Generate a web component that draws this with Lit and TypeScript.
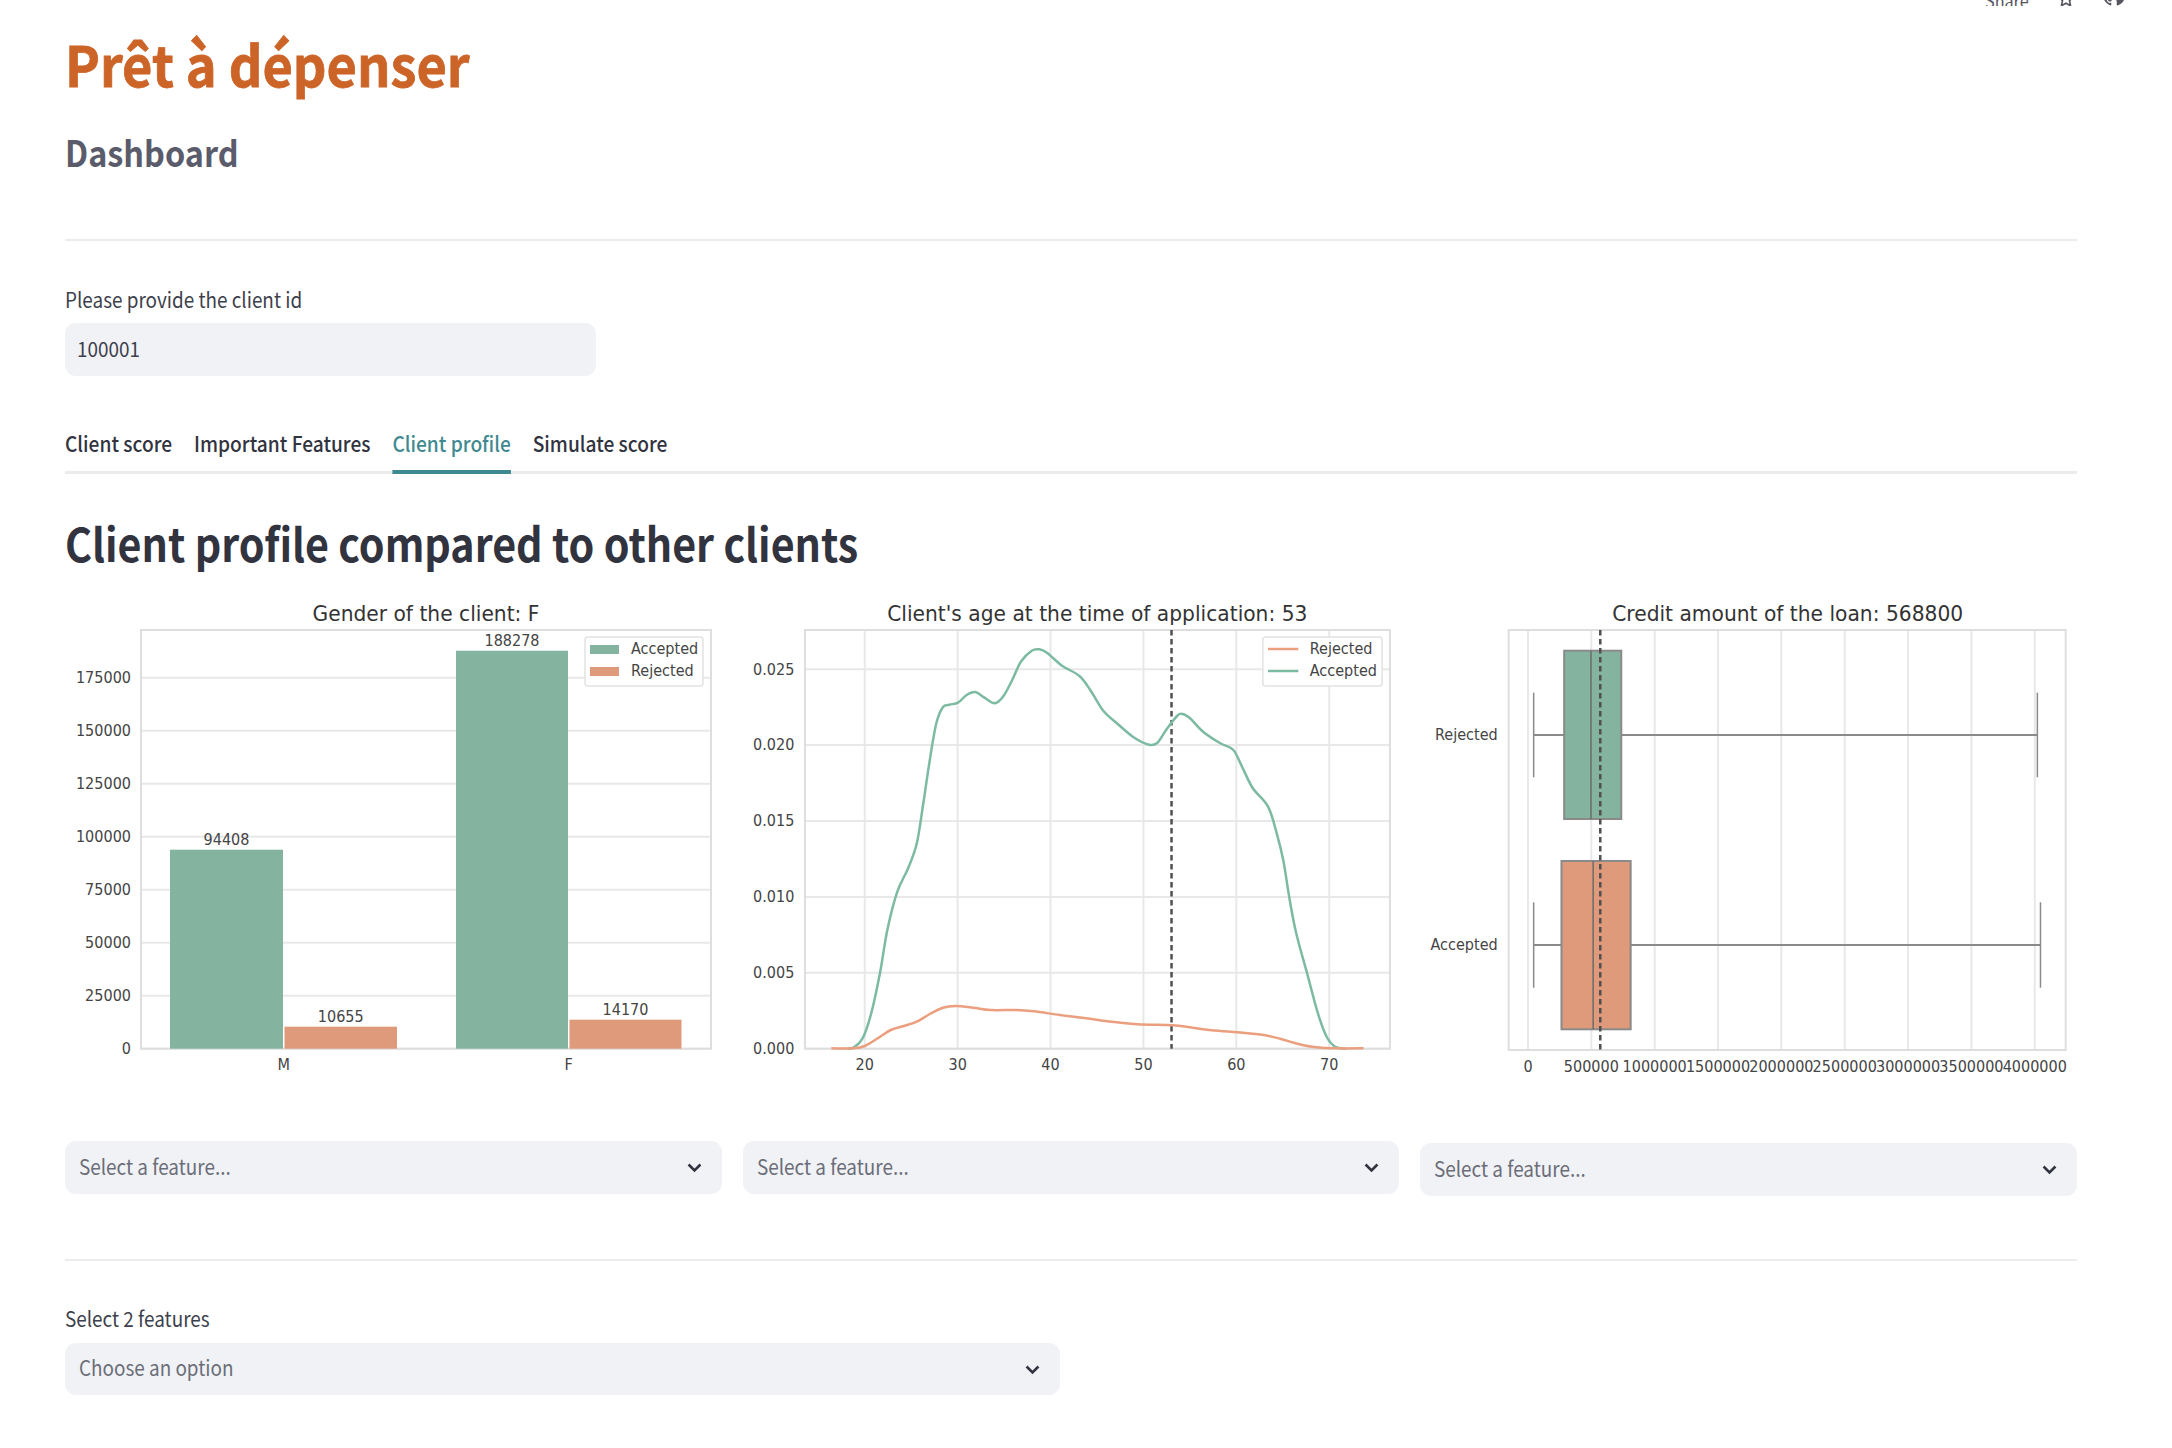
import { LitElement, css, html, svg } from 'lit'
import { customElement } from 'lit/decorators.js'

const GREEN = '#84b4a0'
const ORANGE = '#de9a7a'
const LINE_GREEN = '#7dbaa2'
const LINE_ORANGE = '#eb9f7f'
const GRID = '#e8e8e8'
const FRAME = '#dedede'

// chart text comes out narrow and tall in the source picture, so squeeze it a bit
const label = (x: number, y: number, text: string, cls = 'tick', anchor = 'middle') =>
  svg`<text class=${cls} transform="translate(${x} ${y}) scale(${cls === 'title' ? 0.92 : 0.88} 1)" text-anchor=${anchor} dominant-baseline="central">${text}</text>`

const hline = (x1: number, x2: number, y: number) =>
  svg`<line x1=${x1} x2=${x2} y1=${y} y2=${y} stroke=${GRID} stroke-width="2"></line>`

const vline = (x: number, y1: number, y2: number) =>
  svg`<line x1=${x} x2=${x} y1=${y1} y2=${y2} stroke=${GRID} stroke-width="2"></line>`

const frame = (x1: number, y1: number, x2: number, y2: number) =>
  svg`<rect x=${x1} y=${y1} width=${x2 - x1} height=${y2 - y1} fill="none" stroke=${FRAME} stroke-width="2"></rect>`

const dashed = (x: number, y1: number, y2: number) =>
  svg`<line x1=${x} x2=${x} y1=${y1} y2=${y2} stroke="#505050" stroke-width="2.5" stroke-dasharray="5.5 3.5"></line>`

const legendBox = (x1: number, x2: number) =>
  svg`<rect x=${x1} y="637" width=${x2 - x1} height="49" rx="3" fill="#fff" fill-opacity=".9" stroke="#e2e2e2" stroke-width="1.5"></rect>`

// catmull-rom through the traced points
function smooth(pts: number[][]) {
  let d = `M${pts[0][0]} ${pts[0][1]}`
  for (let i = 0; i < pts.length - 1; i++) {
    const p0 = pts[Math.max(i - 1, 0)]
    const p1 = pts[i]
    const p2 = pts[i + 1]
    const p3 = pts[Math.min(i + 2, pts.length - 1)]
    const c1x = p1[0] + (p2[0] - p0[0]) / 6
    const c1y = p1[1] + (p2[1] - p0[1]) / 6
    const c2x = p2[0] - (p3[0] - p1[0]) / 6
    const c2y = p2[1] - (p3[1] - p1[1]) / 6
    d += ` C${c1x.toFixed(1)} ${c1y.toFixed(1)} ${c2x.toFixed(1)} ${c2y.toFixed(1)} ${p2[0].toFixed(1)} ${p2[1].toFixed(1)}`
  }
  return d
}

const acceptedKde = [
  [270, 1376], [285, 1372], [305, 1345], [325, 1270], [345, 1150], [362, 1020], [385, 905], [410, 835], [430, 760],
  [445, 640], [460, 510], [475, 400], [490, 352], [505, 344], [525, 338], [545, 315], [565, 306], [585, 322],
  [610, 340], [630, 318], [650, 270], [670, 215], [695, 182], [712, 178], [730, 188], [765, 227], [805, 258],
  [830, 300], [860, 362], [890, 398], [930, 442], [965, 464], [985, 458], [1005, 420], [1030, 378], [1043, 372],
  [1060, 385], [1090, 425], [1130, 460], [1160, 480], [1180, 530], [1205, 595], [1240, 650], [1260, 730],
  [1275, 810], [1290, 930], [1305, 1030], [1330, 1150], [1355, 1270], [1375, 1340], [1395, 1370], [1420, 1376],
].map(([x, y]) => [x / 2.306 + 730, y / 3 + 590])

const rejectedKde = [
  [233, 1375], [285, 1375], [310, 1368], [340, 1345], [370, 1320], [400, 1308], [430, 1295], [460, 1272], [490, 1253],
  [520, 1248], [560, 1253], [600, 1260], [660, 1260], [700, 1264], [760, 1275], [820, 1285], [880, 1295], [940, 1303],
  [1020, 1306], [1060, 1312], [1110, 1321], [1170, 1327], [1230, 1335], [1270, 1347], [1310, 1362], [1350, 1372],
  [1400, 1375], [1460, 1375],
].map(([x, y]) => [x / 2.306 + 730, y / 3 + 590])

const genderBars = [
  { x1: 170, x2: 283, top: 849.7, fill: GREEN, value: '94408' },
  { x1: 284.5, x2: 397, top: 1026.7, fill: ORANGE, value: '10655' },
  { x1: 456, x2: 568, top: 650.7, fill: GREEN, value: '188278' },
  { x1: 569.5, x2: 681.5, top: 1019.7, fill: ORANGE, value: '14170' },
]

const creditBoxes = [
  { name: 'Rejected', fill: GREEN, x1: 1564.5, x2: 1621.6, y1: 650.7, y2: 819, med: 1591.3, lo: 1534, hi: 2037.7, mid: 735, capTop: 692.7, capBot: 777.3 },
  { name: 'Accepted', fill: ORANGE, x1: 1561.8, x2: 1631, y1: 861, y2: 1029.3, med: 1593.5, lo: 1534, hi: 2040.8, mid: 945, capTop: 902.3, capBot: 987.7 },
]

function genderChart() {
  const ticks = [0, 25000, 50000, 75000, 100000, 125000, 150000, 175000]
  return html`<svg class="chart" viewBox="65 600 656.67 490">
    ${label(426, 613, 'Gender of the client: F', 'title')}
    ${ticks.map((t, i) => hline(141, 711, 1048.7 - i * 53))}
    ${frame(141, 630, 711, 1048.7)}
    ${genderBars.map(
      (b) => svg`<rect x=${b.x1} y=${b.top} width=${b.x2 - b.x1} height=${1048.7 - b.top} fill=${b.fill}></rect>
        ${label((b.x1 + b.x2) / 2, b.top - 10, b.value)}`
    )}
    ${ticks.map((t, i) => label(131, 1048.7 - i * 53, String(t), 'tick', 'end'))}
    ${label(283.8, 1065, 'M')} ${label(568.6, 1065, 'F')}
    ${legendBox(585, 703)}
    <rect x="590" y="645" width="29" height="9" fill=${GREEN}></rect>
    <rect x="590" y="667" width="29" height="9" fill=${ORANGE}></rect>
    ${label(631, 649, 'Accepted', 'tick', 'start')} ${label(631, 671, 'Rejected', 'tick', 'start')}
  </svg>`
}

function ageChart() {
  const xs = [20, 30, 40, 50, 60, 70]
  const ys = ['0.000', '0.005', '0.010', '0.015', '0.020', '0.025']
  return html`<svg class="chart" viewBox="742.67 600 656.67 490">
    ${label(1097, 613, "Client's age at the time of application: 53", 'title')}
    ${xs.map((a, i) => vline(864.4 + i * 92.9, 630, 1048.7))}
    ${ys.map((v, i) => hline(804.6, 1389.6, 1048.7 - i * 75.9))}
    ${frame(804.6, 630, 1389.6, 1048.7)}
    ${dashed(1171.2, 630, 1048.7)}
    <path d=${smooth(acceptedKde)} fill="none" stroke=${LINE_GREEN} stroke-width="2.5"></path>
    <path d=${smooth(rejectedKde)} fill="none" stroke=${LINE_ORANGE} stroke-width="2.5"></path>
    ${ys.map((v, i) => label(794, 1048.7 - i * 75.9, v, 'tick', 'end'))}
    ${xs.map((a, i) => label(864.4 + i * 92.9, 1065, String(a)))}
    ${legendBox(1262.5, 1381.8)}
    <line x1="1267.7" x2="1298" y1="649" y2="649" stroke=${LINE_ORANGE} stroke-width="2.5"></line>
    <line x1="1267.7" x2="1298" y1="671" y2="671" stroke=${LINE_GREEN} stroke-width="2.5"></line>
    ${label(1309.4, 649, 'Rejected', 'tick', 'start')} ${label(1309.4, 671, 'Accepted', 'tick', 'start')}
  </svg>`
}

function creditChart() {
  const xs = [0, 500000, 1000000, 1500000, 2000000, 2500000, 3000000, 3500000, 4000000]
  return html`<svg class="chart" viewBox="1420.33 600 656.67 490">
    ${label(1788, 613, 'Credit amount of the loan: 568800', 'title')}
    ${xs.map((v, i) => vline(1528.3 + i * 63.35, 630, 1050))}
    ${frame(1509, 630, 2066, 1050)}
    ${creditBoxes.map(
      (b) => svg`
        <line x1=${b.lo} x2=${b.hi} y1=${b.mid} y2=${b.mid} stroke="#8a8a8a" stroke-width="2"></line>
        <line x1=${b.lo} x2=${b.lo} y1=${b.capTop} y2=${b.capBot} stroke="#8a8a8a" stroke-width="1.5"></line>
        <line x1=${b.hi} x2=${b.hi} y1=${b.capTop} y2=${b.capBot} stroke="#8a8a8a" stroke-width="1.5"></line>
        <rect x=${b.x1} y=${b.y1} width=${b.x2 - b.x1} height=${b.y2 - b.y1} fill=${b.fill} stroke="#8a8a8a" stroke-width="2"></rect>
        <line x1=${b.med} x2=${b.med} y1=${b.y1} y2=${b.y2} stroke="#6c6c6c" stroke-width="1.5"></line>
        ${label(1498, b.mid, b.name, 'tick', 'end')}`
    )}
    ${dashed(1600.6, 630, 1050)}
    ${xs.map((v, i) => label(1528.3 + i * 63.35, 1067, String(v)))}
  </svg>`
}

const chevron = html`<svg class="chev" viewBox="0 0 16 16"><path d="M3 5.5l5 5 5-5" fill="none" stroke="currentColor" stroke-width="2.2"></path></svg>`

@customElement('app-root')
export class AppRoot extends LitElement {
  static styles = css`
    :host {
      display: block;
      min-height: 1448px;
      background: #fff;
      overflow: hidden;
      font-family: 'Noto Sans CJK SC', 'Noto Sans', sans-serif;
      color: #31333f;
    }
    .toolbar {
      height: 6px;
      overflow: hidden;
      display: flex;
      justify-content: flex-end;
      align-items: flex-end;
      padding-right: 47px;
      color: #55565f;
    }
    .share {
      font-size: 18px;
      line-height: 22px;
      margin: 0 22px -5px 0;
    }
    .star {
      width: 20px;
      height: 20px;
      margin: 0 27px -3px 0;
      flex: none;
    }
    .git {
      width: 22px;
      height: 22px;
      flex: none;
    }
    main {
      padding: 0 95px 0 65px;
    }
    /* the whole source picture is squeezed sideways */
    h1,
    h2,
    h3,
    .field-label,
    .sq {
      transform: scaleX(0.9);
      transform-origin: left;
      white-space: nowrap;
    }
    .sq {
      display: inline-block;
    }
    h1 {
      margin: 24px 0 0;
      font-size: 56px;
      line-height: 66px;
      font-weight: 700;
      color: #cc6428;
      -webkit-text-stroke: 0.8px #cc6428;
      transform: scaleX(0.935);
    }
    h2 {
      margin: 30px 0 0;
      font-size: 36px;
      line-height: 50px;
      font-weight: 700;
      color: #5a5b6b;
    }
    hr {
      border: 0;
      height: 2px;
      background: #ececee;
      margin: 0;
    }
    .top-rule {
      margin-top: 63px;
    }
    .bottom-rule {
      margin-top: 63px;
    }
    .field-label {
      margin-top: 43px;
      font-size: 21px;
      line-height: 30px;
      color: #3d3f4c;
    }
    .bottom-rule + .field-label {
      margin-top: 42px;
    }
    .input,
    .select {
      background: #f0f2f6;
      border-radius: 11px;
      display: flex;
      align-items: center;
      font-size: 21px;
      box-sizing: border-box;
    }
    .input span,
    .select span {
      margin-bottom: 4px;
    }
    .input {
      margin-top: 9px;
      height: 53px;
      width: 531px;
      padding-left: 12px;
      color: #3d3f4c;
    }
    .select {
      height: 53px;
      padding: 0 18px 0 14px;
      justify-content: space-between;
      color: #6b6d78;
    }
    .select.shifted {
      margin-top: 2px;
    }
    .select.wide {
      margin-top: 10px;
      width: 995px;
      height: 52px;
    }
    .chev {
      width: 19px;
      height: 19px;
      color: #31333f;
      flex: none;
    }
    .tabs {
      margin-top: 44px;
      width: calc(100% / 0.912);
      display: flex;
      gap: 24px;
      border-bottom: 3px solid #ebebed;
      transform: scaleX(0.912);
      transform-origin: left;
    }
    .tab {
      height: 54px;
      margin-bottom: -3px;
      box-sizing: border-box;
      padding-top: 7px;
      font-size: 21px;
      line-height: 32px;
      font-weight: 500;
      border-bottom: 4px solid transparent;
    }
    .tab.active {
      color: #3f8a90;
      border-bottom-color: #3f8a90;
    }
    h3 {
      margin: 38px 0 0;
      font-size: 45.8px;
      line-height: 60px;
      font-weight: 700;
    }
    .row {
      display: grid;
      grid-template-columns: repeat(3, 1fr);
      gap: 21px;
      align-items: start;
    }
    .charts {
      margin-top: 28px;
    }
    .selects {
      margin-top: 51px;
    }
    .chart {
      display: block;
      width: 100%;
      height: 490px;
    }
    .tick {
      font: 16.4px 'DejaVu Sans', sans-serif;
      fill: #444;
    }
    .title {
      font: 22px 'DejaVu Sans', sans-serif;
      fill: #333;
    }
  `

  render() {
    return html`
      <div class="toolbar">
        <span class="share sq">Share</span>
        <svg class="star" viewBox="0 0 24 24"><path d="M12 3.5l2.6 5.6 6.1.7-4.5 4.2 1.2 6-5.4-3-5.4 3 1.2-6-4.5-4.2 6.1-.7z" fill="none" stroke="currentColor" stroke-width="2"></path></svg>
        <svg class="git" viewBox="0 0 16 16"><path fill="currentColor" d="M8 0C3.58 0 0 3.58 0 8c0 3.54 2.29 6.53 5.47 7.59.4.07.55-.17.55-.38 0-.19-.01-.82-.01-1.49-2.01.37-2.53-.49-2.69-.94-.09-.23-.48-.94-.82-1.13-.28-.15-.68-.52-.01-.53.63-.01 1.08.58 1.23.82.72 1.21 1.87.87 2.33.66.07-.52.28-.87.51-1.07-1.78-.2-3.64-.89-3.64-3.95 0-.87.31-1.59.82-2.15-.08-.2-.36-1.02.08-2.12 0 0 .67-.21 2.2.82.64-.18 1.32-.27 2-.27s1.36.09 2 .27c1.53-1.04 2.2-.82 2.2-.82.44 1.1.16 1.92.08 2.12.51.56.82 1.27.82 2.15 0 3.07-1.87 3.75-3.65 3.95.29.25.54.73.54 1.48 0 1.07-.01 1.93-.01 2.2 0 .21.15.46.55.38A8.01 8.01 0 0 0 16 8c0-4.42-3.58-8-8-8z"></path></svg>
      </div>
      <main>
        <h1>Prêt à dépenser</h1>
        <h2>Dashboard</h2>
        <hr class="top-rule" />
        <div class="field-label">Please provide the client id</div>
        <div class="input"><span class="sq">100001</span></div>
        <div class="tabs">
          <div class="tab">Client score</div>
          <div class="tab">Important Features</div>
          <div class="tab active">Client profile</div>
          <div class="tab">Simulate score</div>
        </div>
        <h3>Client profile compared to other clients</h3>
        <div class="row charts">
          <div>${genderChart()}</div>
          <div>${ageChart()}</div>
          <div>${creditChart()}</div>
        </div>
        <div class="row selects">
          <div class="select"><span class="sq">Select a feature...</span>${chevron}</div>
          <div class="select"><span class="sq">Select a feature...</span>${chevron}</div>
          <div class="select shifted"><span class="sq">Select a feature...</span>${chevron}</div>
        </div>
        <hr class="bottom-rule" />
        <div class="field-label">Select 2 features</div>
        <div class="select wide"><span class="sq">Choose an option</span>${chevron}</div>
      </main>
    `
  }
}
